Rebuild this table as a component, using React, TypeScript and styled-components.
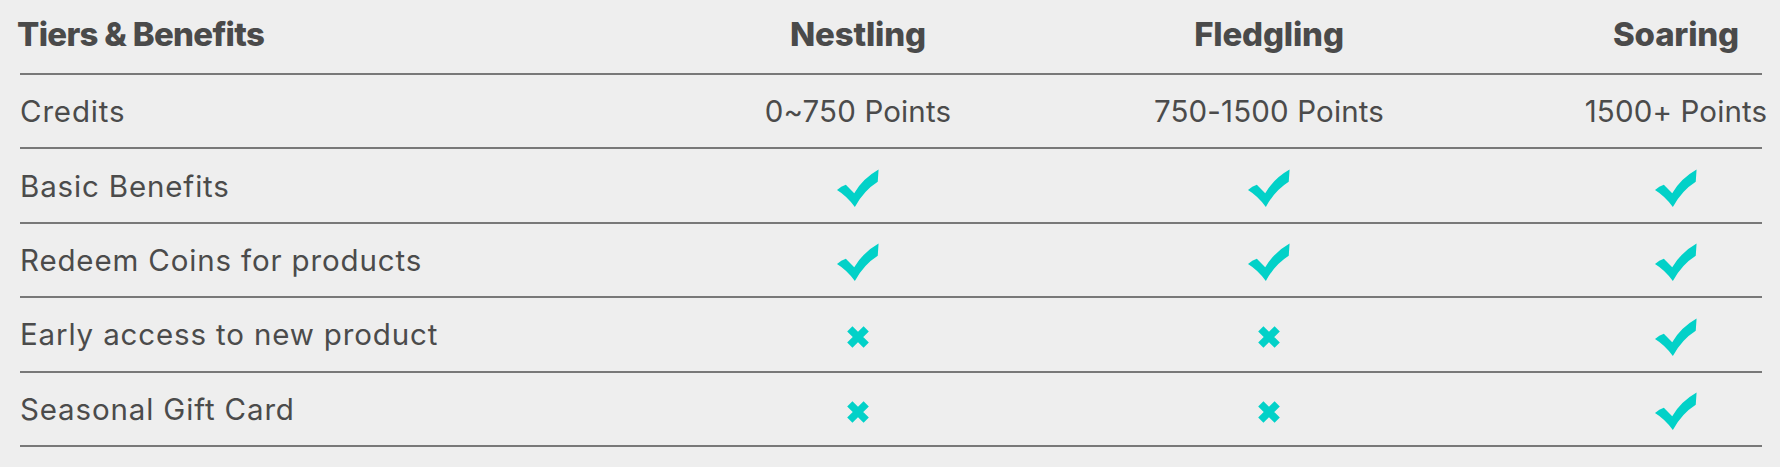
import styled, { createGlobalStyle } from "styled-components";

type Mark = "yes" | "no";

type Benefit = {
  label: string;
  values: [Mark, Mark, Mark];
};

const tiers = [
  { name: "Nestling", credits: "0~750 Points" },
  { name: "Fledgling", credits: "750-1500 Points" },
  { name: "Soaring", credits: "1500+ Points" },
];

const benefits: Benefit[] = [
  { label: "Basic Benefits", values: ["yes", "yes", "yes"] },
  { label: "Redeem Coins for products", values: ["yes", "yes", "yes"] },
  { label: "Early access to new product", values: ["no", "no", "yes"] },
  { label: "Seasonal Gift Card", values: ["no", "no", "yes"] },
];

const GlobalStyle = createGlobalStyle`
  html, body {
    margin: 0;
    padding: 0;
    background: #eeeeee;
  }
  body {
    font-family: Inter, "Noto Sans", "Liberation Sans", sans-serif;
    color: #4b4b4b;
  }
`;

function CheckIcon() {
  return (
    <svg width="42" height="39" viewBox="0 0 40 36" aria-hidden="true">
      <path
        d="M0 19.4 Q4 15.6 8.4 14.4 L16.4 22.6 Q24.5 8.5 39.6 0 L38.8 11.6 Q25.5 20 17 35.6 Q9.5 25.2 0 19.4 Z"
        fill="#02d1c8"
      />
    </svg>
  );
}

function CrossIcon() {
  return (
    <svg width="26" height="26" viewBox="0 0 26 26" aria-hidden="true">
      <path
        d="M4.8 4.8 L21.2 21.2 M21.2 4.8 L4.8 21.2"
        stroke="#02d1c8"
        strokeWidth="7.4"
        strokeLinecap="butt"
      />
    </svg>
  );
}

export default function App() {
  return (
    <>
      <GlobalStyle />
      <Page>
        <Table>
          <HeaderRow>
            <Title>Tiers &amp; Benefits</Title>
            {tiers.map((t) => (
              <TierName key={t.name}>{t.name}</TierName>
            ))}
          </HeaderRow>
          <Row>
            <Label>Credits</Label>
            {tiers.map((t) => (
              <Value key={t.name}>{t.credits}</Value>
            ))}
          </Row>
          {benefits.map((b) => (
            <Row key={b.label}>
              <Label>{b.label}</Label>
              {b.values.map((v, i) => (
                <IconCell key={i}>
                  {v === "yes" ? <CheckIcon /> : <CrossIcon />}
                </IconCell>
              ))}
            </Row>
          ))}
        </Table>
      </Page>
    </>
  );
}

const Page = styled.div`
  width: 1780px;
  height: 467px;
  padding-left: 20px;
  box-sizing: border-box;
`;

const Table = styled.div`
  width: 1742px;
  display: flex;
  flex-direction: column;
`;

const BaseRow = styled.div`
  display: grid;
  grid-template-columns: 1fr 180px 180px 172px;
  column-gap: 231px;
  align-items: center;
  border-bottom: 2px solid #787878;
  box-sizing: border-box;
`;

const HeaderRow = styled(BaseRow)`
  height: 75px;
  padding-bottom: 6px;
`;

const Row = styled(BaseRow)`
  height: 74.4px;
`;

const Title = styled.h2`
  margin: 0 0 0 -3px;
  font-size: 33px;
  font-weight: 800;
  letter-spacing: -0.7px;
  color: #4a4a4a;
`;

const TierName = styled.div`
  display: flex;
  justify-content: center;
  white-space: nowrap;
  font-size: 33px;
  font-weight: 800;
  letter-spacing: -0.2px;
  color: #4a4a4a;
`;

const Label = styled.div`
  font-size: 29.5px;
  font-weight: 400;
  letter-spacing: 0.85px;
  white-space: nowrap;
`;

const Value = styled.div`
  display: flex;
  justify-content: center;
  white-space: nowrap;
  font-size: 29.5px;
  font-weight: 400;
  letter-spacing: 0.15px;
`;

const IconCell = styled.div`
  display: flex;
  justify-content: center;
  padding-top: 6px;
`;
